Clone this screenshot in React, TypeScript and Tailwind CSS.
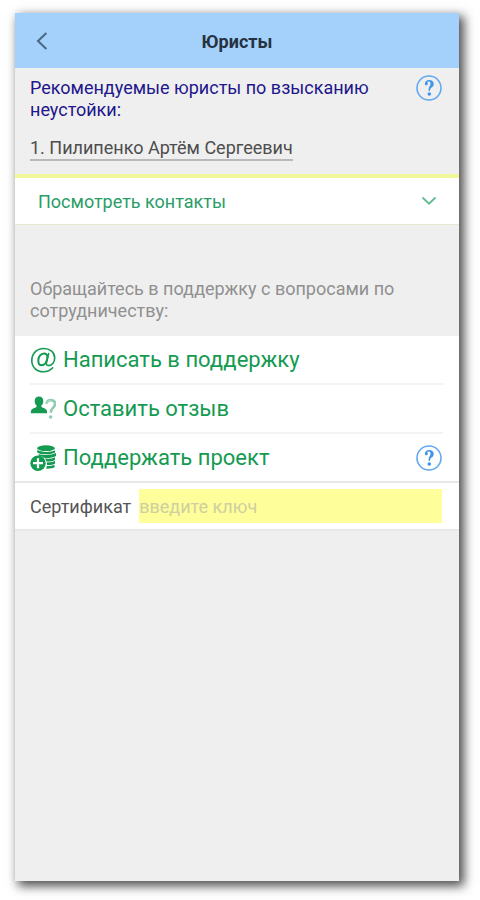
import { useState } from 'react';
import type { ReactNode } from 'react';

function BackIcon() {
  return (
    <svg className="h-5 w-3" fill="none" viewBox="0 0 12 20">
      <path d="M10.4 2 2 10l8.4 8" stroke="#4a6782" strokeWidth="2" />
    </svg>
  );
}

function HelpIcon() {
  return (
    <svg className="h-7 w-7" fill="none" viewBox="0 0 28 28">
      <circle cx="14" cy="14" r="12" stroke="#62a9f0" strokeWidth="1.6" />
      <path
        d="M9.900 10.300c-.1-2.500 1.600-4.300 4.300-4.300 2.700 0 4.500 1.500 4.500 3.900 0 1.800-1 2.700-2.200 3.700-1.100 1-1.500 1.700-1.600 3.400h-1.200c-.2-2.300.1-3.500.9-4.800.7-1 .9-1.500.9-2.500 0-1.500-.6-2.300-1.700-2.300-.9 0-1.400.4-1.400.9 0 .5.400.7.400 1.500 0 .9-.6 1.500-1.500 1.500-.7 0-1.300-.4-1.400-1Z"
        fill="#3f93ea"
      />
      <circle cx="14.300" cy="20" r="1.800" fill="#3f93ea" />
    </svg>
  );
}

function MailIcon() {
  return (
    <svg className="h-[26px] w-[26px]" fill="none" stroke="#159a52" strokeLinecap="round" viewBox="0 0 26 26">
      <path
        d="M22.700 20.800c-2.300 2.600-5.500 3.900-9.300 3.900C6.500 24.700 1.800 20.100 1.800 13.500 1.800 6.600 6.800 1.500 13.700 1.500c6.400 0 11 3.900 11 9.400 0 4.700-2.900 7.700-6.100 7.700-1.900 0-2.500-1.100-2.100-2.900l2.100-9.100"
        strokeWidth="1.6"
      />
      <path d="M17.500 10.300c-.2-2.400-1.600-3.700-3.500-3.700-3.300 0-5.700 3.300-5.700 7.100 0 2.800 1.200 4.500 3.400 4.500 2.900 0 5-3 5.800-7.900Z" strokeWidth="2" />
    </svg>
  );
}

function ReviewIcon() {
  return (
    <svg className="h-[26px] w-[26px]" fill="none" viewBox="0 0 26 26">
      <path
        d="M9 .5c2.700 0 4.300 1.700 4.300 4.400 0 2-.7 3.500-1.900 4.500v1.300c.5 1 4.400 1.600 5.200 3.200.4.800.5 2 .5 3.400H.8c0-1.400.1-2.600.5-3.400.8-1.600 4.800-2.200 5.300-3.200V9.400c-1.200-1-1.900-2.500-1.900-4.500C4.700 2.200 6.300.5 9 .5Z"
        fill="#159a52"
      />
      <path
        d="M16.500 7.900c.3-2.500 1.800-3.800 4.200-3.800 2.600 0 4.300 1.500 4.300 3.900 0 3.600-4.200 3.900-4.200 8.700"
        stroke="#93cdb0"
        strokeWidth="2.600"
      />
      <path d="M16.900 7.700c.4-2.100 1.700-3.400 3.900-3.400" stroke="#cfe9dc" strokeWidth=".7" />
      <circle cx="20.600" cy="21" r="1.800" fill="#93cdb0" />
    </svg>
  );
}

function DonateIcon() {
  return (
    <svg className="h-[26px] w-[26px]" fill="none" viewBox="0 0 26 26">
      <ellipse cx="16" cy="3.200" rx="9" ry="2.900" fill="#159a52" />
      <path d="M7.200 5.100c3.300 2.300 14.300 2.400 17.800.1v2.300c-3.500 2.400-14.500 2.300-17.800-.1V5.100Z" fill="#159a52" />
      <path d="M8.600 9c4.300 1.600 13.200 1.300 17.400-.9v2.800c-3.400 2-8.400 2.300-12 1.800-1.500-1.300-3.300-1.900-5.400-2V9Z" fill="#159a52" />
      <path d="M14.900 13.600c3.700.4 7.200 0 10.100-1.400v2.700c-2.300 1.300-5.300 1.700-8.500 1.500-.4-1.100-.9-2-1.600-2.800Z" fill="#159a52" />
      <path d="M16.900 17.300c3.100.2 6-.1 8.100-1.200v2.600c-2 1.200-5 1.500-8 1.300.1-.9.100-1.800-.1-2.700Z" fill="#159a52" />
      <path d="M16.900 20.900c2.900.1 5.600-.2 7.600-1.200v2.500c-1.900 1.200-5.400 1.600-8.600 1.400.5-.8.800-1.700 1-2.700Z" fill="#159a52" />
      <circle cx="8" cy="18.200" r="7.700" fill="#159a52" />
      <path d="M8 13.200v10M3 18.200h10" stroke="#fff" strokeWidth="2.200" />
    </svg>
  );
}

function HelpButton() {
  return (
    <button aria-label="Справка" className="shrink-0" type="button">
      <HelpIcon />
    </button>
  );
}

function ActionRow({ icon, label, help = false }: Readonly<{ icon: ReactNode; label: string; help?: boolean }>) {
  return (
    <li className="box-content flex h-[47px] items-center justify-between border-b-2 border-[#f3f3f3] last:border-b-0">
      <button className="flex items-center gap-[7px] text-[22px] leading-7 text-[#159a52]" type="button">
        {icon}
        {label}
      </button>
      {help ? <HelpButton /> : null}
    </li>
  );
}

export default function App() {
  const [certificate, setCertificate] = useState('');

  return (
    <div className="flex min-h-screen bg-white pt-[13px] pr-[21px] pb-[19px] pl-[15px] font-[Roboto,sans-serif]">
      <main className="flex-1 bg-[#efefef] shadow-[4px_4px_10px_1px_rgba(0,0,0,0.7)]">
        <header className="grid h-[55px] grid-cols-[1fr_auto_1fr] items-center bg-[#a3d1fc] px-[21px] pt-px">
          <button aria-label="Назад" className="justify-self-start" type="button">
            <BackIcon />
          </button>
          <h1 className="text-[18px] font-bold text-[#26323e]">Юристы</h1>
        </header>

        <section className="pt-[6px] pr-4 pb-[13px] pl-[15px]">
          <div className="flex items-start justify-between">
            <h2 className="pt-[3px] text-[18px] leading-[22px] text-[#21168c]">
              Рекомендуемые юристы по взысканию неустойки:
            </h2>
            <HelpButton />
          </div>
          <a className="mt-4 inline-block border-b-2 border-[#b9b9b9] text-[18px] leading-[22px] text-[#4d4d4d]" href="#lawyer">
            1. Пилипенко Артём Сергеевич
          </a>
        </section>

        <button
          className="flex h-[51px] w-full items-center justify-between border-t-4 border-b border-t-[#f1f89b] border-b-[#e6e8cf] bg-white pr-[22px] pl-[23px] text-[18px] text-[#2a9d68]"
          type="button"
        >
          Посмотреть контакты
          <svg className="h-4 w-4" fill="none" viewBox="0 0 16 16">
            <path d="M1.500 4.500 8 10.700l6.500-6.200" stroke="#62bb94" strokeWidth="1.800" />
          </svg>
        </button>

        <p className="px-[15px] pt-[53px] pb-[14px] text-[18px] leading-[22px] text-[#909090]">
          Обращайтесь в поддержку с вопросами по сотрудничеству:
        </p>

        <ul className="bg-white pr-4 pl-[15px]">
          <ActionRow icon={<MailIcon />} label="Написать в поддержку" />
          <ActionRow icon={<ReviewIcon />} label="Оставить отзыв" />
          <ActionRow help icon={<DonateIcon />} label="Поддержать проект" />
        </ul>

        <div className="flex items-center gap-2 border-y-2 border-[#e8e8e8] bg-white py-[6px] pr-[17px] pl-[15px] text-[18px]">
          <label className="text-[#555555]" htmlFor="certificate">
            Сертификат
          </label>
          <input
            className="h-[34px] min-w-0 flex-1 bg-[#fefe9b] outline-none placeholder:text-[#cfcf9f]"
            id="certificate"
            onChange={(event) => setCertificate(event.target.value)}
            placeholder="введите ключ"
            type="text"
            value={certificate}
          />
        </div>
      </main>
    </div>
  );
}
